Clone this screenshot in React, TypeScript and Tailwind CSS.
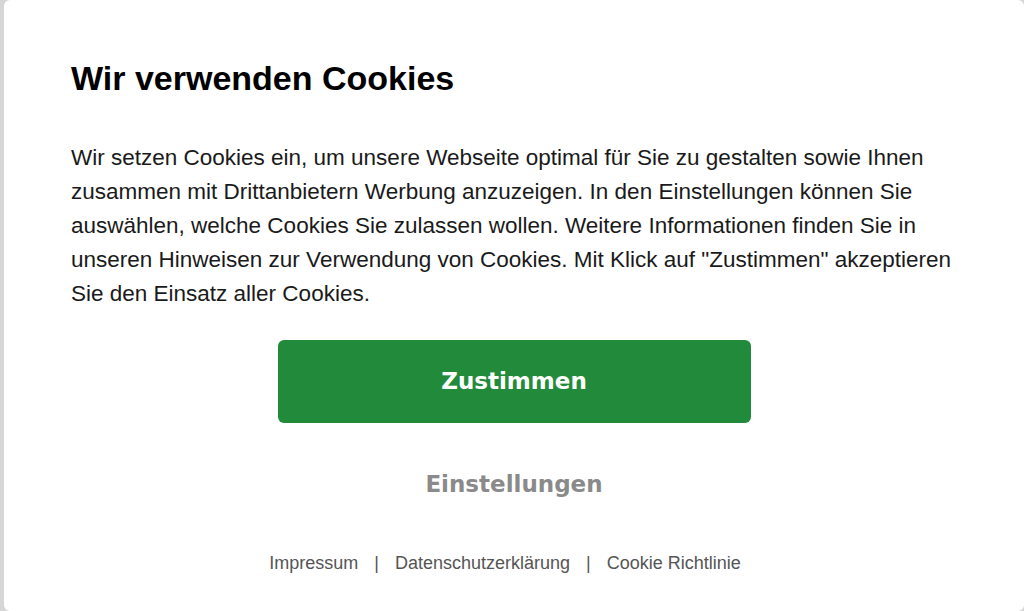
import React from "react";

export default function App() {
  return (
    <div className="w-[1024px] h-[611px] bg-[#d6d6d6] overflow-hidden">
      <div className="ml-[4px] w-[1020px] h-[611px] bg-white rounded-[6px] px-[67px] pt-[58px] font-['Liberation_Sans',Arial,sans-serif]">
        <h1 className="text-[34px] leading-[40px] font-bold text-black">Wir verwenden Cookies</h1>
        <p className="mt-[43px] text-[22.5px] leading-[34px] text-[#1a1a1a]">
          Wir setzen Cookies ein, um unsere Webseite optimal für Sie zu gestalten sowie Ihnen zusammen mit Drittanbietern Werbung anzuzeigen. In den Einstellungen können Sie auswählen, welche Cookies Sie zulassen wollen. Weitere Informationen finden Sie in unseren Hinweisen zur Verwendung von Cookies. Mit Klick auf "Zustimmen" akzeptieren Sie den Einsatz aller Cookies.
        </p>
        <div className="flex flex-col items-center">
          <button className="mt-[29px] w-[473px] h-[83px] rounded-[6px] bg-[#228b3b] text-white text-[23px] font-bold font-['DejaVu_Sans',Verdana,sans-serif]">
            Zustimmen
          </button>
          <button className="mt-[46px] text-[23px] leading-[30px] font-bold text-[#8a8a8a] font-['DejaVu_Sans',Verdana,sans-serif]">
            Einstellungen
          </button>
          <div className="mt-[54px] pr-[18px] flex items-center text-[18px] leading-[20px] text-[#555555]">
            <span>Impressum</span>
            <span className="mx-[16px]">|</span>
            <span>Datenschutzerklärung</span>
            <span className="mx-[16px]">|</span>
            <span>Cookie Richtlinie</span>
          </div>
        </div>
      </div>
    </div>
  );
}
